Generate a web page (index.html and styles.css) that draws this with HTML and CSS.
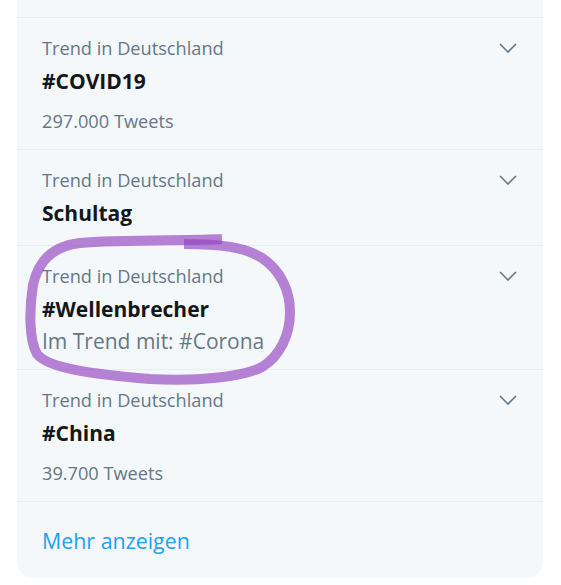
FILE: index.html
```html
<!DOCTYPE html>
<html lang="de">
<head>
    <meta charset="UTF-8">
    <meta name="viewport" content="width=device-width, initial-scale=1.0">
    <title>Trends</title>
    <link rel="stylesheet" href="styles.css">
</head>
<body>
    <div class="card">
        <div class="trend-cut"></div>

        <div class="trend">
            <div class="trend-text">
                <div class="trend-label">Trend in Deutschland</div>
                <div class="trend-name">#COVID19</div>
                <div class="trend-count">297.000 Tweets</div>
            </div>
            <svg class="chevron" viewBox="0 0 18 10"><polyline points="1,1 9,9 17,1"/></svg>
        </div>

        <div class="trend trend-short">
            <div class="trend-text">
                <div class="trend-label">Trend in Deutschland</div>
                <div class="trend-name">Schultag</div>
            </div>
            <svg class="chevron" viewBox="0 0 18 10"><polyline points="1,1 9,9 17,1"/></svg>
        </div>

        <div class="trend trend-related">
            <div class="trend-text">
                <div class="trend-label">Trend in Deutschland</div>
                <div class="trend-name">#Wellenbrecher</div>
                <div class="trend-with">Im Trend mit: #Corona</div>
            </div>
            <svg class="chevron" viewBox="0 0 18 10"><polyline points="1,1 9,9 17,1"/></svg>
        </div>

        <div class="trend">
            <div class="trend-text">
                <div class="trend-label">Trend in Deutschland</div>
                <div class="trend-name">#China</div>
                <div class="trend-count">39.700 Tweets</div>
            </div>
            <svg class="chevron" viewBox="0 0 18 10"><polyline points="1,1 9,9 17,1"/></svg>
        </div>

        <a class="more" href="#">Mehr anzeigen</a>
    </div>

    <!-- hand drawn marker round the third trend -->
    <svg class="marker" viewBox="0 0 561 585">
        <path d="M222,239 C190,241 120,239 80,243 C52,246 38,262 33,285 C29,310 29,340 37,354 C48,368 90,374 150,379 C200,382 245,376 262,367 C280,356 290,335 290,312 C290,290 280,270 262,258"/>
        <path d="M262,258 C245,247 220,244 184,244"/>
    </svg>
</body>
</html>
```

FILE: styles.css
```css
body {
    margin: 0;
    padding: 0 18px 0 17px;
    background: #ffffff;
    font-family: "Open Sans", "Noto Sans", sans-serif;
    position: relative;
}
.card {
    background: #f5f8fa;
    border-radius: 0 0 16px 16px;
}
.trend-cut {
    height: 17px;
    border-bottom: 1px solid #e6ecf0;
}
.trend {
    display: flex;
    justify-content: space-between;
    align-items: flex-start;
    padding: 18px 26px 16px 25px;
    border-bottom: 1px solid #e6ecf0;
}
.trend-short {
    padding-bottom: 19px;
}
.trend-related {
    padding-bottom: 15px;
}
.trend-label,
.trend-count {
    color: #657786;
    font-size: 18.2px;
    line-height: 24px;
}
.trend-name {
    color: #14171a;
    font-size: 21px;
    font-weight: bold;
    line-height: 26px;
    margin-top: 8px;
}
.trend-count {
    margin-top: 15px;
}
.trend-with {
    color: #657786;
    font-size: 21px;
    line-height: 26px;
    margin-top: 6px;
}
.chevron {
    width: 18px;
    height: 10px;
    margin-top: 7px;
    fill: none;
    stroke: #657786;
    stroke-width: 1.6;
}
.more {
    display: block;
    padding: 26px 25px 24px;
    color: #1da1f2;
    font-size: 21.4px;
    line-height: 26px;
    text-decoration: none;
}
.marker {
    position: absolute;
    top: 0;
    left: 0;
    width: 561px;
    height: 585px;
    pointer-events: none;
    fill: none;
    stroke: #9040c0;
    stroke-opacity: 0.65;
    stroke-width: 10;
    stroke-linecap: butt;
    filter: blur(0.6px);
}
```
